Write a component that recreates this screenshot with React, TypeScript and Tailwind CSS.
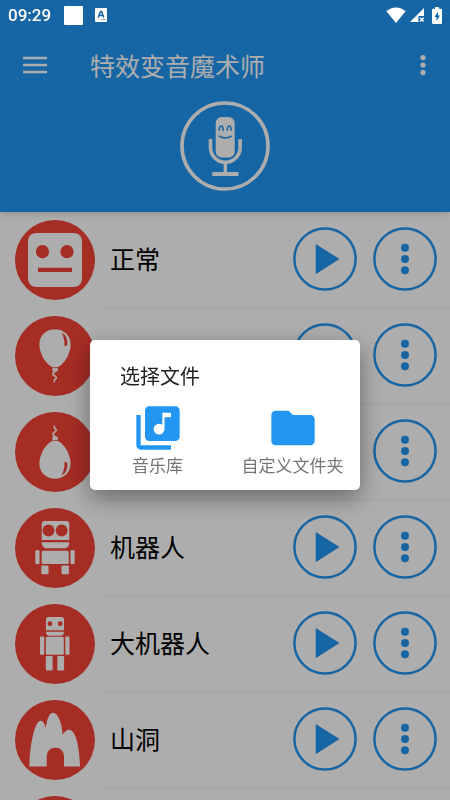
import type { ReactNode } from 'react';
import { MdFolder, MdLibraryMusic } from 'react-icons/md';

interface Effect {
  id: string;
  name?: string;
  icon?: ReactNode;
}

// Balloon body, knot and string, reused upside down for the heavy gas effect
const balloon = (
  <>
    <path
      fill="#fff"
      d="M40 13.3c-9 0-15.6 6.2-15.6 15.2 0 9.500 6.600 19.500 12.600 22.500l.6 1-.4 3.200h5.800l-.4-3.200.6-1c6-3 12.400-13 12.400-22.500 0-9-6.600-15.200-15.600-15.200z"
    />
    <path d="M37 51.600h6.400" stroke="#f44336" strokeWidth="0.8" />
    <path
      d="M40.500 55c-1 1.500-3 1.500-2.600 3.200.4 1.800 3.600 1.500 3.400 3.600-.2 1.700-2.800 1.400-2 4.600"
      fill="none"
      stroke="#fff"
      strokeWidth="1.6"
    />
    <path fill="#f44336" d="M46.500 16.500c4.500 2.200 6.500 7 5.700 12.800l-2.700.9c.2-5.500-.6-9.400-3-13.700z" />
  </>
);

const effects: Effect[] = [
  {
    id: 'normal',
    name: '正常',
    icon: (
      <>
        <rect x="13" y="13" width="54" height="54" rx="8" fill="#fff" />
        <circle cx="27.500" cy="31.700" r="6.600" fill="#f44336" />
        <circle cx="52" cy="31.700" r="6.600" fill="#f44336" />
        <rect x="23" y="47.700" width="34" height="4.300" fill="#f44336" />
      </>
    ),
  },
  { id: 'balloon', icon: balloon },
  { id: 'heavy-balloon', icon: <g transform="matrix(1 0 0 -1 0 80)">{balloon}</g> },
  {
    id: 'robot',
    name: '机器人',
    icon: (
      <g fill="#fff">
        <path d="M30 13h21a3.300 3.300 0 0 1 3.300 3.300V32H26.700V16.300A3.300 3.300 0 0 1 30 13z" />
        <circle cx="33.500" cy="22.400" r="6" fill="#f44336" />
        <circle cx="46.700" cy="22.400" r="6" fill="#f44336" />
        <path d="M26.700 34.300h27.600c0 3.500-2 6-5 6H31.700c-3 0-5-2.500-5-6z" />
        <rect x="26.700" y="42.700" width="27" height="13.200" rx="1.500" />
        <rect x="20.300" y="42.300" width="4.200" height="13.800" rx="1" />
        <rect x="55.500" y="42.300" width="4.200" height="13.800" rx="1" />
        <rect x="26.300" y="57.600" width="7.200" height="8.600" rx="1" />
        <rect x="46.500" y="57.600" width="7.400" height="8.600" rx="1" />
      </g>
    ),
  },
  {
    id: 'big-robot',
    name: '大机器人',
    icon: (
      <g fill="#fff">
        <path d="M33.500 13h13a2.500 2.500 0 0 1 2.500 2.500V26.200H31V15.500A2.500 2.500 0 0 1 33.500 13z" />
        <circle cx="35" cy="19.700" r="2.400" fill="#f44336" />
        <circle cx="45.200" cy="19.700" r="2.400" fill="#f44336" />
        <path d="M31 27.700h18c0 2.500-1.300 4-3.500 4h-11c-2.200 0-3.500-1.500-3.500-4z" />
        <rect x="30.800" y="32.800" width="18" height="18" rx="1.500" />
        <rect x="25" y="32.500" width="4.200" height="18.200" rx="1" />
        <rect x="50.300" y="32.500" width="4.200" height="18.200" rx="1" />
        <rect x="30.800" y="52" width="6.800" height="14.400" rx="1" />
        <rect x="42.300" y="52" width="6.800" height="14.400" rx="1" />
      </g>
    ),
  },
  {
    id: 'cave',
    name: '山洞',
    icon: (
      <path
        fill="#fff"
        d="M14.300 66.400c.5-20 5-45.700 11.400-45.700 2.300 0 4 2.700 5.100 7.300 1-8.700 3.400-15.300 7.200-15.300 5.300 0 9 11.300 9.700 22 1.700-3 3.700-5 6.300-5 7.300 0 10.500 18.700 11 36.700H49V57c0-6-3.500-9.300-8.500-9.300S31.700 51 31.700 57v9.400z"
      />
    ),
  },
  { id: 'next' },
];

function StatusBar() {
  return (
    <div className="relative z-20 h-[30px] px-2 flex items-center text-white">
      <span className="font-[Roboto] font-medium text-[17px] leading-5">09:29</span>
      <span className="ml-[13px] size-[19px] rounded-[1px] bg-white" />
      <svg className="ml-3 w-3 h-3.5" viewBox="0 0 12 14">
        <rect width="12" height="14" rx="1" fill="#fff" />
        <path d="M3.200 9.500 5.500 3.500h1L8.800 9.500M4.200 7.500h3.600" fill="none" stroke="#1766a5" strokeWidth="1.5" />
        <path d="M6.500 11.500h4" stroke="#1766a5" strokeWidth="0.6" />
      </svg>
      <div className="ml-auto flex items-center gap-1">
        <svg className="w-5 h-4" viewBox="0 0 20 16">
          <path d="M10 16 .4 4.200C3 1.700 6.300.4 10 .4s7 1.300 9.600 3.800z" fill="#fff" />
        </svg>
        <svg className="w-3.5 h-3.5" viewBox="0 0 14 14">
          <path d="M14 0v8H8.500v6H0z" fill="#fff" />
          <path d="m10 9.800 3.700 3.700m0-3.700L10 13.500" stroke="#fff" strokeWidth="1.300" />
        </svg>
        <svg className="ml-1 w-[10px] h-[17px]" viewBox="0 0 10 17">
          <path d="M3 0h4v1.700h2a1 1 0 0 1 1 1V16a1 1 0 0 1-1 1H1a1 1 0 0 1-1-1V2.700a1 1 0 0 1 1-1h2z" fill="#fff" />
          <path d="M6 4.500 2.500 10h2v4L8 8.500H6z" fill="#1766a5" />
        </svg>
      </div>
    </div>
  );
}

function MicLogo() {
  return (
    <svg className="size-[90px] mx-auto" viewBox="0 0 90 90" fill="none">
      <circle cx="45" cy="45" r="43" stroke="#fff" strokeWidth="3.600" />
      <rect x="35.700" y="16" width="19" height="40.500" rx="6" fill="#fff" />
      <path
        d="M39.200 29.800c0-6.500 4-6.500 4 0M47.300 29.800c0-6.500 4-6.500 4 0M38.800 34.800c4 2.600 9 2.600 13 0"
        stroke="#2196f3"
        strokeWidth="1.600"
      />
      <path d="M30.500 38v8.500a14.800 14.800 0 0 0 29.600 0V38" stroke="#fff" strokeWidth="3.600" />
      <path d="M45.300 62v10" stroke="#fff" strokeWidth="3.400" />
      <path d="M32.300 73h26.200" stroke="#fff" strokeWidth="4" />
    </svg>
  );
}

function EffectRow({ effect }: { effect: Effect }) {
  return (
    <li className="flex items-center pl-[15px]">
      <svg className="size-20 shrink-0" viewBox="0 0 80 80">
        <circle cx="40" cy="40" r="40" fill="#f44336" />
        {effect.icon}
      </svg>
      <div className="ml-2 h-24 flex-1 flex items-center gap-4 border-b border-[#f0f0f0] pl-[7px] pr-[13px] pb-0.5">
        <span className="flex-1 pb-0.5 text-[25px] leading-8 text-black">{effect.name}</span>
        <button className="size-16" aria-label="播放">
          <svg viewBox="0 0 64 64">
            <circle cx="32" cy="32" r="30.600" fill="none" stroke="#2196f3" strokeWidth="2.500" />
            <path d="M22.700 17v30.200L46.500 32z" fill="#2196f3" />
          </svg>
        </button>
        <button className="size-16" aria-label="更多">
          <svg viewBox="0 0 64 64">
            <circle cx="32" cy="32" r="30.600" fill="none" stroke="#2196f3" strokeWidth="2.500" />
            <g fill="#2196f3">
              <circle cx="32" cy="20.700" r="4" />
              <circle cx="32" cy="32" r="4" />
              <circle cx="32" cy="43.300" r="4" />
            </g>
          </svg>
        </button>
      </div>
    </li>
  );
}

function FileDialog() {
  return (
    <div className="fixed inset-0 z-10 flex items-center justify-center bg-black/32 pt-[30px]">
      <div
        role="dialog"
        aria-labelledby="dialog-title"
        className="w-3/5 rounded-[5px] bg-white pt-6 pb-3.5 shadow-[0_8px_24px_rgba(0,0,0,0.4)]"
      >
        <h2 id="dialog-title" className="mb-3.5 px-[30px] text-[20px] leading-6 text-[#212121]">
          选择文件
        </h2>
        <div className="grid grid-cols-2 text-[17px] leading-[22px] text-[#757575]">
          <button className="flex flex-col items-center">
            <MdLibraryMusic className="size-[52px] text-[#2196f3]" />
            音乐库
          </button>
          <button className="flex flex-col items-center">
            <MdFolder className="size-[52px] text-[#2196f3]" />
            自定义文件夹
          </button>
        </div>
      </div>
    </div>
  );
}

export default function App() {
  return (
    <div className="h-screen overflow-hidden flex flex-col bg-white font-['Noto_Sans_CJK_SC',sans-serif]">
      <header className="shrink-0 bg-[#2196f3] pb-[21px] shadow-md">
        <StatusBar />
        <div className="h-[71px] flex items-center pl-[23px] pr-4 pb-0.5 text-white">
          <button aria-label="菜单">
            <svg className="w-6 h-[18px]" viewBox="0 0 24 18">
              <path d="M0 2h24M0 9h24M0 16h24" stroke="#fff" strokeWidth="2.600" />
            </svg>
          </button>
          <h1 className="ml-[43px] flex-1 text-[25px] leading-8">特效变音魔术师</h1>
          <button aria-label="选项" className="px-2">
            <svg className="w-1.5 h-5" viewBox="0 0 6 20" fill="#fff">
              <circle cx="3" cy="2.600" r="2.600" />
              <circle cx="3" cy="10" r="2.600" />
              <circle cx="3" cy="17.400" r="2.600" />
            </svg>
          </button>
        </div>
        <MicLogo />
      </header>

      <ul className="flex-1 overflow-hidden">
        {effects.map((effect) => (
          <EffectRow key={effect.id} effect={effect} />
        ))}
      </ul>

      <FileDialog />
    </div>
  );
}
